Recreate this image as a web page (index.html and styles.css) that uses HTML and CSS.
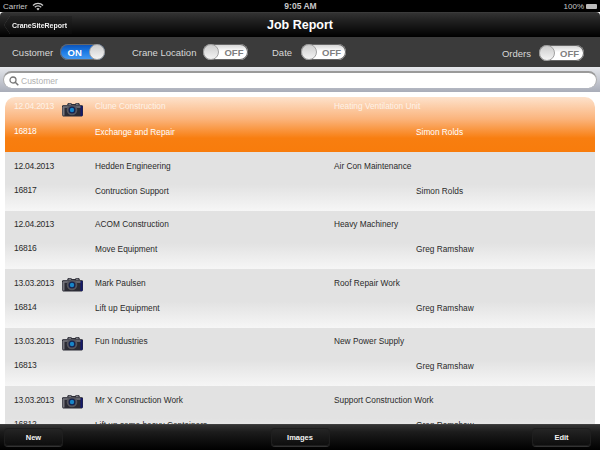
FILE: index.html
```html
<!DOCTYPE html>
<html lang="en">
<head>
    <meta charset="UTF-8">
    <meta name="viewport" content="width=device-width, initial-scale=1.0">
    <title>Job Report</title>
    <link rel="stylesheet" href="styles.css">
</head>
<body>

    <svg class="defs" width="0" height="0">
        <defs>
            <symbol id="camera" viewBox="0 0 21 15">
                <path d="M1 3h4l1-2h3l1 1h3l1-1h3l1 2h2l1 1v9l-1 1.500H1l-1-1.500V4z" fill="#2b2b34"/>
                <path d="M1 3.500h19v2.500H1z" fill="#64646c"/>
                <path d="M6.500 1.500h2.500v1.500H6.500zM14 1.500h2.500v1.500H14z" fill="#77777e"/>
                <path d="M18.500 4h2v10h-2z" fill="#14196a"/>
                <path d="M.5 5h2v8.500h-2z" fill="#77777e"/>
                <circle cx="10" cy="8" r="5.300" fill="#55555c"/>
                <circle cx="10" cy="8" r="3.500" fill="#16224e"/>
                <circle cx="10" cy="8" r="2.200" fill="#1886c8"/>
            </symbol>
        </defs>
    </svg>

    <div class="status">
        <div class="status-left">
            <span>Carrier</span>
            <svg class="wifi" viewBox="0 0 12 9" width="12" height="9">
                <path d="M1 3.500a7 7 0 0 1 10 0M2.800 5.300a4.500 4.500 0 0 1 6.400 0" fill="none" stroke="#ccc" stroke-width="1.300"/>
                <path d="M6 8.500L4.400 6.800a2.300 2.300 0 0 1 3.200 0z" fill="#ccc"/>
            </svg>
        </div>
        <span class="status-time">9:05 AM</span>
        <div class="status-right">
            <span>100%</span>
            <span class="battery"></span>
        </div>
    </div>

    <div class="nav">
        <div class="back-wrap"><a class="back">CraneSiteReport</a></div>
        <h1>Job Report</h1>
    </div>

    <div class="filters">
        <div class="filter filter-customer">
            <span>Customer</span>
            <div class="switch on"><b>ON</b><i></i></div>
        </div>
        <div class="filter filter-location">
            <span>Crane Location</span>
            <div class="switch"><i></i><b>OFF</b></div>
        </div>
        <div class="filter filter-date">
            <span>Date</span>
            <div class="switch"><i></i><b>OFF</b></div>
        </div>
        <div class="filter filter-orders">
            <span>Orders</span>
            <div class="switch"><i></i><b>OFF</b></div>
        </div>
    </div>

    <div class="search">
        <div class="search-box">
            <svg viewBox="0 0 10 10" width="10" height="10">
                <circle cx="4" cy="4" r="3" fill="none" stroke="#777" stroke-width="1.300"/>
                <path d="M6.300 6.300L9.300 9.300" stroke="#777" stroke-width="1.500"/>
            </svg>
            <span>Customer</span>
        </div>
    </div>

    <div class="list">
        <div class="row selected">
            <span class="date">12.04.2013</span>
            <svg class="cam"><use href="#camera"/></svg>
            <span class="customer">Clune Construction</span>
            <span class="job">Heating Ventilation Unit</span>
            <span class="num">16818</span>
            <span class="task">Exchange and Repair</span>
            <span class="person">Simon Rolds</span>
        </div>
        <div class="row">
            <span class="date">12.04.2013</span>
            <span class="customer">Hedden Engineering</span>
            <span class="job">Air Con Maintenance</span>
            <span class="num">16817</span>
            <span class="task">Contruction Support</span>
            <span class="person">Simon Rolds</span>
        </div>
        <div class="row">
            <span class="date">12.04.2013</span>
            <span class="customer">ACOM Construction</span>
            <span class="job">Heavy Machinery</span>
            <span class="num">16816</span>
            <span class="task">Move Equipment</span>
            <span class="person">Greg Ramshaw</span>
        </div>
        <div class="row">
            <span class="date">13.03.2013</span>
            <svg class="cam"><use href="#camera"/></svg>
            <span class="customer">Mark Paulsen</span>
            <span class="job">Roof Repair Work</span>
            <span class="num">16814</span>
            <span class="task">Lift up Equipment</span>
            <span class="person">Greg Ramshaw</span>
        </div>
        <div class="row">
            <span class="date">13.03.2013</span>
            <svg class="cam"><use href="#camera"/></svg>
            <span class="customer">Fun Industries</span>
            <span class="job">New Power Supply</span>
            <span class="num">16813</span>
            <span class="task"></span>
            <span class="person">Greg Ramshaw</span>
        </div>
        <div class="row">
            <span class="date">13.03.2013</span>
            <svg class="cam"><use href="#camera"/></svg>
            <span class="customer">Mr X Construction Work</span>
            <span class="job">Support Construction Work</span>
            <span class="num">16812</span>
            <span class="task">Lift up some heavy Containers</span>
            <span class="person">Greg Ramshaw</span>
        </div>
    </div>

    <div class="toolbar">
        <a class="tool">New</a>
        <a class="tool tool-mid">Images</a>
        <a class="tool">Edit</a>
    </div>

</body>
</html>
```

FILE: styles.css
```css
* {
    margin: 0;
    padding: 0;
    box-sizing: border-box;
    font-family: 'Liberation Sans', Arial, sans-serif;
}

html, body {
    height: 100%;
    overflow: hidden;
}

body {
    display: flex;
    flex-direction: column;
    background: #fff;
}

.defs {
    position: absolute;
}

/* status bar */
.status {
    height: 12px;
    flex: none;
    background: #000;
    color: #c8c8c8;
    font-size: 8px;
    padding: 0 2px 0 3px;
    display: grid;
    grid-template-columns: 1fr auto 1fr;
    align-items: center;
}

.status-left {
    display: flex;
    align-items: center;
    gap: 5px;
}

.status-time {
    font-weight: bold;
    font-size: 8.500px;
}

.status-right {
    display: flex;
    align-items: center;
    justify-content: flex-end;
    gap: 2px;
}

.battery {
    width: 11px;
    height: 5px;
    background: #bbb;
    border-radius: 1px;
    margin-right: 1px;
}

/* nav bar */
.nav {
    height: 25px;
    flex: none;
    position: relative;
    display: flex;
    align-items: center;
    justify-content: center;
    background: linear-gradient(#4a4a4a 0, #333 3%, #232323 30%, #000 100%);
    border-radius: 4px 4px 0 0;
}

.nav h1 {
    color: #fff;
    font-size: 12.500px;
    font-weight: bold;
}

/* the outline has to sit on a wrapper, clip-path would cut it off the button */
.back-wrap {
    position: absolute;
    left: 4px;
    top: 4px;
    filter: drop-shadow(0 0 .6px #666);
}

.back {
    width: 68px;
    height: 18px;
    clip-path: polygon(0 50%, 6px 0, 100% 0, 100% 100%, 6px 100%);
    background: linear-gradient(#242424, #0a0a0a);
    color: #f2f2f2;
    font-size: 7px;
    font-weight: bold;
    display: flex;
    align-items: center;
    justify-content: center;
    padding-left: 3px;
}

/* filter switches */
.filters {
    height: 30px;
    flex: none;
    background: #3b3b3b;
    color: #d8d8d8;
    font-size: 9.500px;
    display: flex;
    align-items: center;
    padding: 0 16px 0 12px;
}

.filter {
    display: flex;
    align-items: center;
    gap: 8px;
}

.filter-customer {
    width: 120px;
    gap: 7px;
}

.filter-location {
    width: 140px;
    gap: 7px;
}

.filter-date {
    flex: 1;
    gap: 9px;
}

.filter-orders {
    margin-top: 2px;
}

.switch {
    width: 45px;
    height: 16px;
    border-radius: 8px;
    background: linear-gradient(#cfcfcf, #fff 45%, #fff);
    display: flex;
    align-items: center;
    justify-content: space-between;
    box-shadow: 0 0 0 1px #666 inset;
    font-size: 9.500px;
    color: #808080;
}

.switch b {
    flex: 1;
    text-align: center;
}

.switch i {
    width: 16px;
    height: 16px;
    border-radius: 50%;
    background: linear-gradient(#ccc, #f4f4f4);
    border: 1px solid #a0a0a0;
    flex: none;
}

.switch.on {
    background: linear-gradient(#0a4fb4, #1d7ce6 50%, #4a9cf0);
    color: #fff;
}

/* search */
.search {
    height: 25px;
    flex: none;
    padding: 4px 3px 3px;
    background: linear-gradient(#e6e8ec, #a9adb9);
}

.search-box {
    height: 17px;
    background: #fff;
    border-radius: 9px;
    border-top: 2px solid #9a9a9a;
    border-left: 1px solid #aaa;
    border-right: 1px solid #aaa;
    display: flex;
    align-items: center;
    gap: 2px;
    padding-left: 5px;
    color: #b0b0b0;
    font-size: 8.500px;
}

/* job list */
.list {
    flex: 1;
    min-height: 0;
    overflow: hidden;
    padding: 5px 5px 0;
}

.row {
    height: 58.600px;
    position: relative;
    display: grid;
    grid-template-columns: 81px 239px 82px 1fr;
    grid-template-rows: 25px 25px;
    padding: 1px 0 0 9px;
    align-items: center;
    background: linear-gradient(#e2e2e2 0, #e2e2e2 55%, #f6f6f6 100%);
    color: #2a2a2a;
    font-size: 8.300px;
}

.row.selected {
    height: 55px;
    padding-top: 0;
    grid-template-rows: 18px 34px;
    border-radius: 10px 10px 0 0;
    background: linear-gradient(#fde2cc 0, #fbb47c 40%, #f87e10 75%, #f87c0c 100%);
    color: #fff;
}

.row.selected .date,
.row.selected .customer,
.row.selected .job {
    color: #fdf2e8;
}

.date,
.num {
    font-size: 8.500px;
    letter-spacing: -.25px;
}

.date { grid-area: 1 / 1; }
.customer { grid-area: 1 / 2; }
.job { grid-area: 1 / 3 / 1 / 5; }
.num { grid-area: 2 / 1; margin-top: -2px; }
.task { grid-area: 2 / 2; }
.person { grid-area: 2 / 4; }

/* camera sits over the row */
.cam {
    position: absolute;
    left: 57px;
    top: 8px;
    width: 21px;
    height: 15px;
}

.selected .cam {
    top: 5px;
}

/* bottom toolbar */
.toolbar {
    height: 26px;
    flex: none;
    position: relative;
    display: flex;
    align-items: center;
    justify-content: space-between;
    padding: 0 9px 0 4px;
    background: linear-gradient(#4a4a4a 0, #333 4%, #1c1c1c 30%, #000 100%);
}

.tool {
    width: 59px;
    height: 18px;
    border-radius: 4px;
    background: linear-gradient(#262626, #0c0c0c);
    box-shadow: 0 0 0 1px #1e1e1e inset, 0 1px 0 #333;
    color: #f2f2f2;
    font-size: 7.500px;
    font-weight: bold;
    display: flex;
    align-items: center;
    justify-content: center;
}

.tool-mid {
    margin-left: 5px;
}
```
